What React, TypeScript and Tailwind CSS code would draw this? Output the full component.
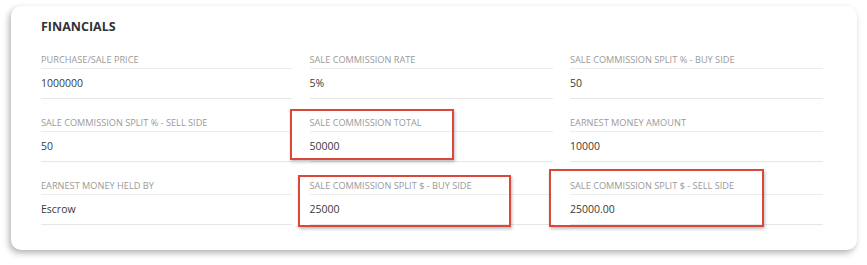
import React from 'react';

const Financials = () => {
  const campos = [
    { label: "Purchase/Sale Price", valor: "1000000" },
    { label: "Sale Commission Rate", valor: "5%" },
    { label: "Sale Commission Split % - Buy Side", valor: "50" },
    { label: "Sale Commission Split % - Sell Side", valor: "50" },
    { label: "Sale Commission Total", valor: "50000" },
    { label: "Earnest Money Amount", valor: "10000" },
    { label: "Earnest Money Held By", valor: "Escrow" },
    { label: "Sale Commission Split $ - Buy Side", valor: "25000" },
    { label: "Sale Commission Split $ - Sell Side", valor: "25000.00" }
  ];

  return (
    <div className="min-h-screen bg-white pt-[6px] pl-[11px] font-['Open_Sans',sans-serif]">
      <div className="relative w-[846px] h-[244px] bg-white rounded-[10px] shadow-[-2px_3px_6px_rgba(0,0,0,0.3)] px-[30px] pt-[12px]">
        <h2 className="text-[12.5px] leading-[18px] font-bold text-[#333]">FINANCIALS</h2>

        <div className="grid grid-cols-[251px_243px_253px] gap-x-[17.5px]">
          {campos.map((campo, index) => (
            <div key={index} className="pt-[16px]">
              <div className="h-[16px] leading-[16px] text-[9.2px] uppercase text-[#9a9a9a] border-b border-[#ececec] box-content whitespace-nowrap">
                {campo.label}
              </div>
              <div className="h-[29px] leading-[29px] text-[10.5px] text-[#3a3a3a] border-b border-[#e6e6e6] box-content">
                {campo.valor}
              </div>
            </div>
          ))}
        </div>

        {/* resaltados */}
        <div className="absolute left-[279px] top-[103px] w-[164px] h-[51px] border-2 border-[#d9483a] shadow-[1px_2px_3px_rgba(0,0,0,0.25)]" />
        <div className="absolute left-[287px] top-[169px] w-[213px] h-[52px] border-2 border-[#d9483a] shadow-[1px_2px_3px_rgba(0,0,0,0.25)]" />
        <div className="absolute left-[538px] top-[163px] w-[215px] h-[58px] border-2 border-[#d9483a] shadow-[1px_2px_3px_rgba(0,0,0,0.25)]" />
      </div>
    </div>
  );
};

export default Financials;
